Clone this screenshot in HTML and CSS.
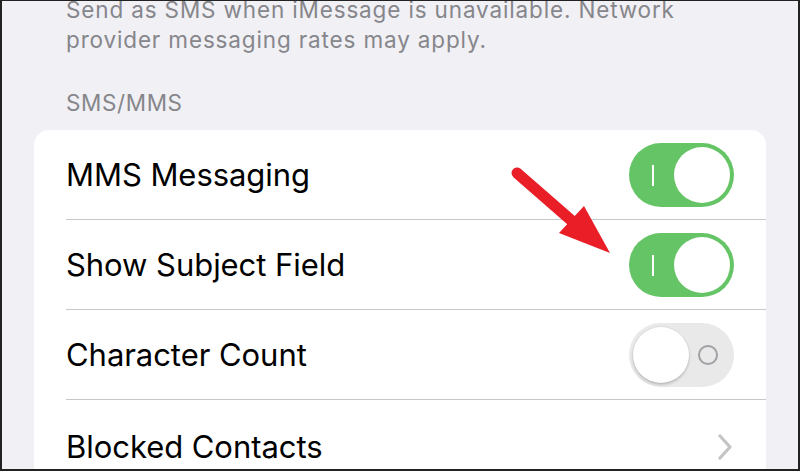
FILE: index.html
```html
<!DOCTYPE html>
<html>
<head>
<meta charset="utf-8">
<link rel="stylesheet" href="styles.css">
</head>
<body>
<div class="frame">
  <div class="footer-note">
    <p>Send as SMS when iMessage is unavailable. Network provider messaging rates may apply.</p>
  </div>
  <div class="section-header">SMS/MMS</div>
  <div class="card">
    <div class="row">
      <span class="label">MMS Messaging</span>
      <span class="toggle on"><span class="mark-i"></span><span class="knob"></span></span>
    </div>
    <div class="row">
      <span class="label">Show Subject Field</span>
      <span class="toggle on"><span class="mark-i"></span><span class="knob"></span></span>
    </div>
    <div class="row">
      <span class="label">Character Count</span>
      <span class="toggle off"><span class="knob"></span><span class="mark-o"></span></span>
    </div>
    <div class="row last">
      <span class="label">Blocked Contacts</span>
      <svg class="chevron" width="16" height="26" viewBox="0 0 16 26"><path d="M3 2 L13 13 L3 24" fill="none" stroke="#c4c4c7" stroke-width="3.2" stroke-linecap="round" stroke-linejoin="round"/></svg>
    </div>
  </div>
  <svg class="arrow" width="800" height="471" viewBox="0 0 800 471">
    <line x1="517" y1="173" x2="572" y2="221" stroke="#e91e27" stroke-width="11" stroke-linecap="round"/>
    <polygon points="610,253 559,233 584,206" fill="#e91e27"/>
  </svg>
</div>
</body>
</html>
```
FILE: styles.css
```css
* { box-sizing: border-box; }
html, body { margin: 0; padding: 0; }
body {
  width: 800px;
  height: 471px;
  overflow: hidden;
  font-family: Inter, "Liberation Sans", sans-serif;
}
.frame {
  position: relative;
  width: 800px;
  height: 471px;
  background: #f0f0f5;
  border: 2px solid #222;
  border-top-width: 1px;
  overflow: hidden;
  padding-left: 32px;
  padding-right: 32px;
}
.footer-note {
  margin-top: -6px;
  padding-left: 32px;
}
.footer-note p {
  margin: 0;
  width: 650px;
  font-size: 22.5px;
  line-height: 30px;
  color: #86868b;
  letter-spacing: 0.85px;
}
.section-header {
  margin-top: 36px;
  padding-left: 32px;
  font-size: 22.5px;
  line-height: 24px;
  color: #86868b;
  letter-spacing: 0.6px;
}
.card {
  margin-top: 15px;
  background: #fff;
  border-radius: 15px 15px 0 0;
  padding-left: 32px;
  height: 360px;
}
.row {
  height: 90px;
  display: flex;
  align-items: center;
  justify-content: space-between;
  border-bottom: 1px solid #c8c8cc;
  padding-right: 32px;
}
.row.last { border-bottom: none; padding-right: 33px; padding-top: 3px; }
.label {
  font-size: 31px;
  line-height: 36px;
  color: #000;
  letter-spacing: -0.05px;
  padding-top: 1px;
}
.toggle {
  position: relative;
  width: 105px;
  height: 64px;
  border-radius: 32px;
  display: flex;
  align-items: center;
  padding: 0 4px;
}
.toggle.on {
  background: #65c466;
  justify-content: flex-end;
}
.toggle.off {
  background: #e9e9ea;
  justify-content: space-between;
  padding-right: 16px;
}
.knob {
  width: 56px;
  height: 56px;
  border-radius: 50%;
  background: #fff;
}
.toggle.off .knob {
  box-shadow: 0 2px 3px rgba(0,0,0,0.18), 0 0 0 1px rgba(0,0,0,0.04);
}
.mark-i {
  position: absolute;
  left: 23px;
  top: 22px;
  width: 2px;
  height: 21px;
  background: #fff;
}
.mark-o {
  width: 20px;
  height: 20px;
  border-radius: 50%;
  border: 2px solid #a0a0a4;
}
.arrow {
  position: absolute;
  left: -2px;
  top: -1px;
  pointer-events: none;
}
```
